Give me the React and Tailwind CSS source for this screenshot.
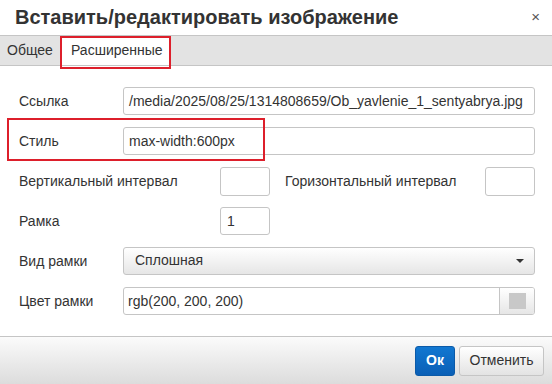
const FONT = { fontFamily: '"Liberation Sans", Arial, sans-serif' };

function Row({ label, children }) {
  return (
    <div className="flex items-center h-[28px]">
      <div className="w-[104px] shrink-0">{label}</div>
      {children}
    </div>
  );
}

export default function App() {
  return (
    <div className="relative w-[552px] h-[384px] bg-white text-[14px] text-[#333] overflow-hidden flex flex-col" style={FONT}>
      {/* Title */}
      <div className="h-[36px] shrink-0 flex items-center justify-between pl-[15px] pr-[12px] border-b border-[#c5c5c5]">
        <div className="text-[20px] font-bold leading-none -mt-[2px]">Вставить/редактировать изображение</div>
        <div className="text-[15px] text-[#555] leading-none -mt-[2px]">×</div>
      </div>

      {/* Tabs */}
      <div className="h-[30px] shrink-0 flex bg-[#e3e3e3] border-b border-[#c5c5c5]">
        <div className="w-[60px] flex items-center pl-[7px]">Общее</div>
        <div className="w-[110px] flex items-center pl-[11px] bg-white">Расширенные</div>
      </div>

      {/* Form */}
      <div className="flex-1 pt-[21px] pl-[19px] pr-[17px] flex flex-col gap-[12px]">
        <Row label="Ссылка">
          <div className="flex-1 h-full border border-[#c5c5c5] rounded-[3px] flex items-center pl-[5px] whitespace-nowrap overflow-hidden">
            /media/2025/08/25/1314808659/Ob_yavlenie_1_sentyabrya.jpg
          </div>
        </Row>
        <Row label="Стиль">
          <div className="flex-1 h-full border border-[#c5c5c5] rounded-[3px] flex items-center pl-[5px]">
            max-width:600px
          </div>
        </Row>
        <div className="flex items-center h-[29px]">
          <div className="w-[201px] shrink-0">Вертикальный интервал</div>
          <div className="w-[50px] h-full border border-[#c5c5c5] rounded-[3px]" />
          <div className="ml-[15px] flex-1">Горизонтальный интервал</div>
          <div className="w-[50px] h-full border border-[#c5c5c5] rounded-[3px]" />
        </div>
        <div className="flex items-center h-[28px] -mt-[1px]">
          <div className="w-[201px] shrink-0">Рамка</div>
          <div className="w-[50px] h-full border border-[#c5c5c5] rounded-[3px] flex items-center pl-[6px]">1</div>
        </div>
        <Row label="Вид рамки">
          <div className="flex-1 h-full border border-[#c5c5c5] rounded-[3px] flex items-center justify-between pl-[11px] pr-[10px] bg-gradient-to-b from-white to-[#e6e6e6]">
            <span className="-mt-[2px]">Сплошная</span>
            <svg width="8" height="4" viewBox="0 0 8 4"><path d="M0 0h8L4 4z" fill="#333" /></svg>
          </div>
        </Row>
        <Row label="Цвет рамки">
          <div className="flex-1 h-full border border-[#c5c5c5] rounded-[3px] flex overflow-hidden">
            <div className="flex-1 flex items-center pl-[4px]">rgb(200, 200, 200)</div>
            <div className="w-[35px] border-l border-[#c5c5c5] bg-gradient-to-b from-white to-[#e6e6e6] flex items-center justify-center">
              <div className="w-[17px] h-[16px] bg-[#c8c8c8]" />
            </div>
          </div>
        </Row>
      </div>

      {/* Footer */}
      <div className="h-[48px] shrink-0 border-t border-[#c5c5c5] bg-gradient-to-b from-[#fbfbfb] to-[#dcdcdc] flex items-center justify-end gap-[4px] pr-[8px]">
        <div className="w-[40px] h-[30px] rounded-[3px] border border-[#0b5aa8] bg-gradient-to-b from-[#1177d1] to-[#0a5fb6] text-white font-bold flex items-center justify-center">Ок</div>
        <div className="w-[85px] h-[30px] rounded-[3px] border border-[#c5c5c5] bg-gradient-to-b from-white to-[#e3e3e3] flex items-center justify-center">Отменить</div>
      </div>

      {/* Annotation boxes */}
      <div className="absolute left-[60px] top-[36px] w-[111px] h-[33px] border-2 border-[#dd1f2b] pointer-events-none" />
      <div className="absolute left-[7px] top-[118px] w-[258px] h-[43px] border-2 border-[#dd1f2b] pointer-events-none" />
    </div>
  );
}
